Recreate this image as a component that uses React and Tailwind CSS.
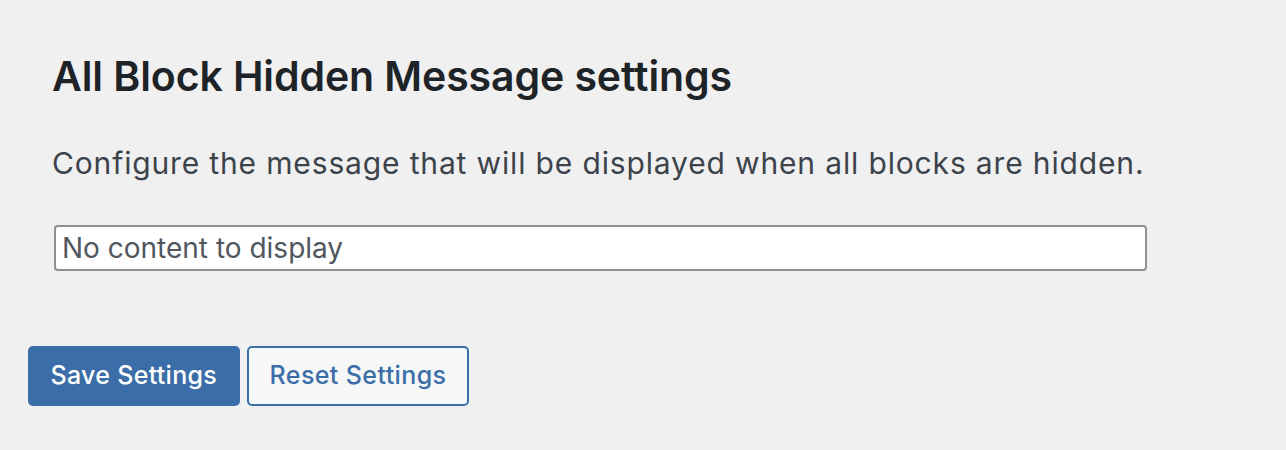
import React from 'react';

const App = () => {
  return (
    <div className="min-h-[450px] bg-[#f0f0f1] px-[28px] pt-[50px] font-['Inter','Liberation_Sans',sans-serif]">
      <div className="px-[24px]">
        <h2 className="text-[41px] leading-[52px] tracking-[-0.1px] font-semibold text-[#1d2327]">
          All Block Hidden Message settings
        </h2>
        <p className="mt-[41px] text-[30px] leading-[40px] tracking-[0.85px] text-[#3c434a]">
          Configure the message that will be displayed when all blocks are hidden.
        </p>
        <input
          type="text"
          defaultValue="No content to display"
          className="block mt-[42px] ml-[2px] w-[1093px] h-[46px] px-[6px] bg-white border-2 border-[#8c8f94] rounded-[4px] text-[28px] text-[#50575e] outline-none"
        />
      </div>
      <div className="mt-[75px] flex gap-[7px]">
        <button className="h-[60px] px-[22.5px] rounded-[5px] bg-[#3b6ea8] text-white text-[25px] tracking-[0.3px] font-medium">
          Save Settings
        </button>
        <button className="h-[60px] px-[21px] rounded-[5px] bg-[#f6f7f7] border-2 border-[#3b6ea8] text-[#3b6ea8] text-[25px] tracking-[0.4px] font-medium">
          Reset Settings
        </button>
      </div>
    </div>
  );
};

export default App;
